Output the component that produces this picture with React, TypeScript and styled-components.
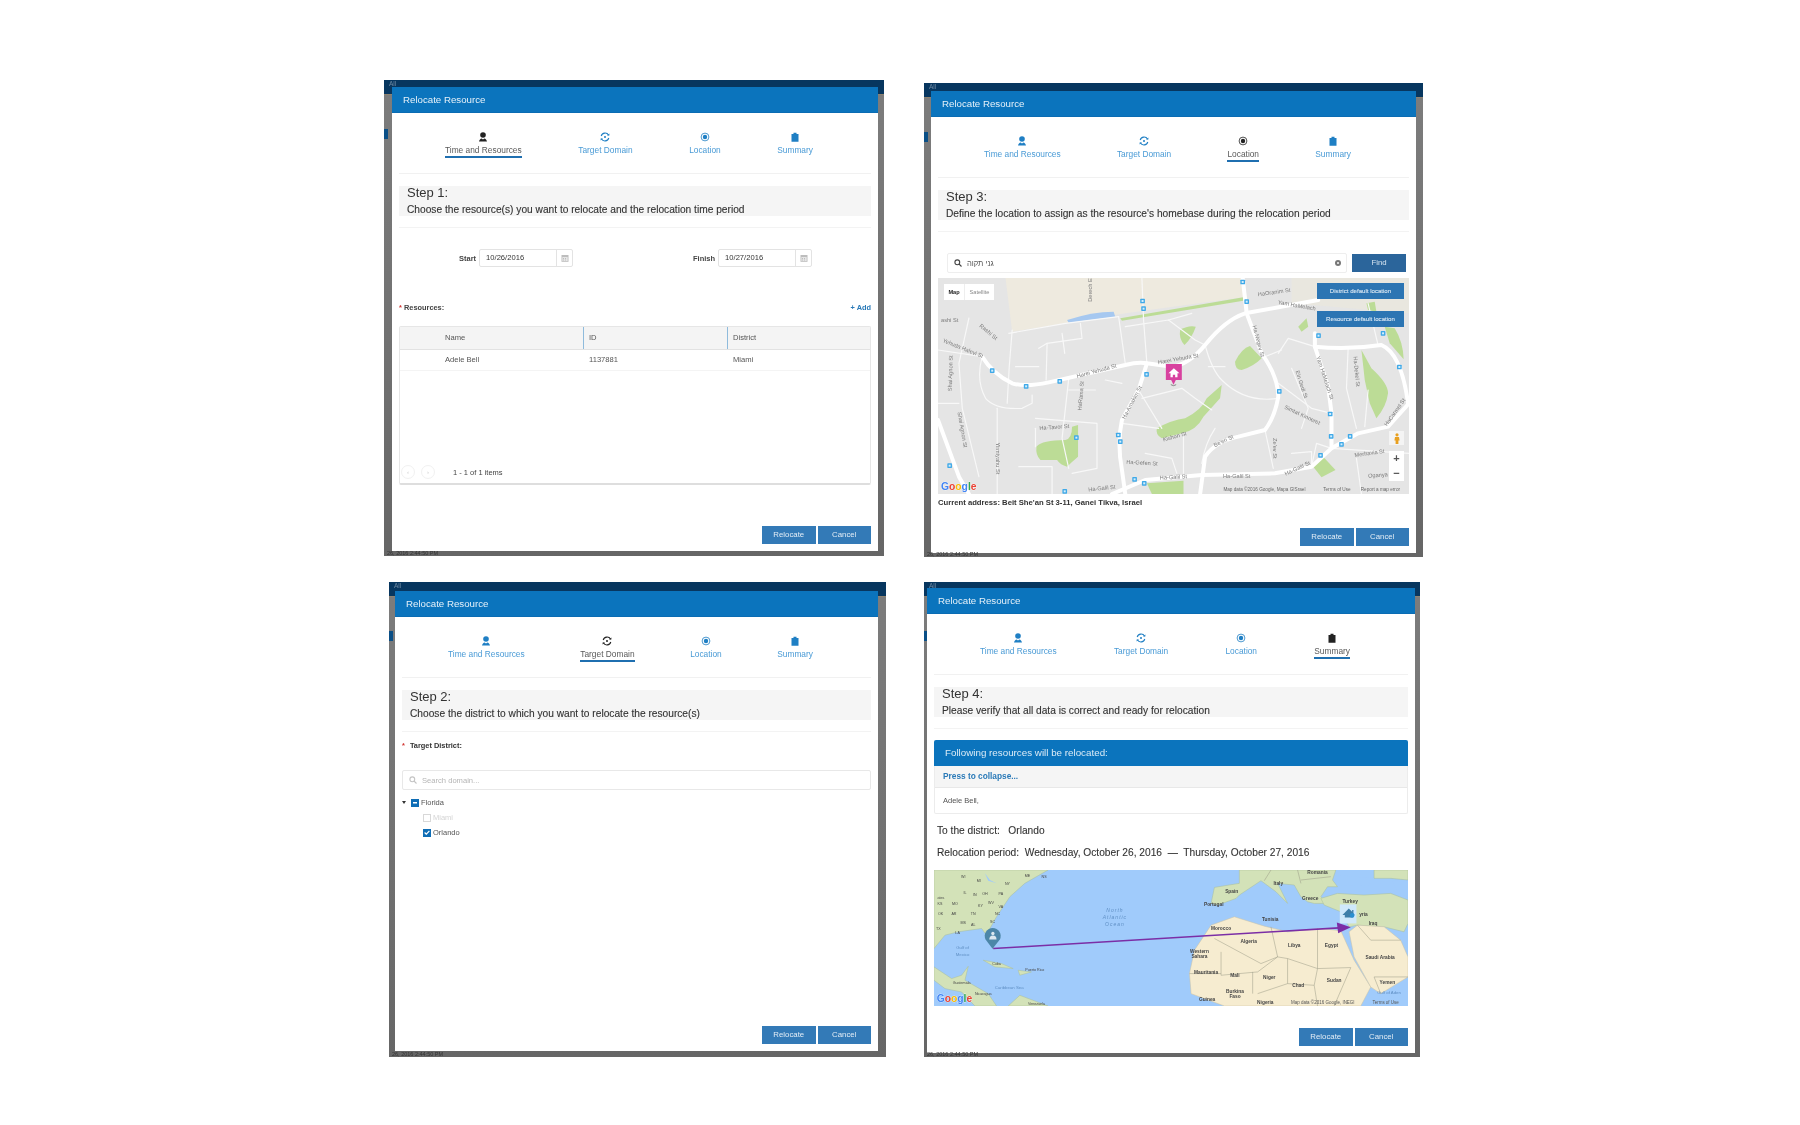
import React from 'react';
import styled, { createGlobalStyle } from 'styled-components';

const FONT = '"Liberation Sans", Arial, sans-serif';
const TABS = ['Time and Resources', 'Target Domain', 'Location', 'Summary'];

const GlobalStyle = createGlobalStyle`
  html, body {
    margin: 0;
    background: #fff;
    font-family: ${FONT};
    overflow: hidden;
  }
`;

const Page = styled.div`
  width: 1800px;
  height: 1125px;
  background: #fff;
`;

const ShotRow = styled.div<{ $top: number; $left: number }>`
  display: flex;
  align-items: flex-start;
  padding: ${(p) => p.$top}px 0 0 ${(p) => p.$left}px;
`;

const Shot = styled.div<{ $w: number; $h: number; $ml?: number; $mt?: number; $pad: string }>`
  position: relative;
  box-sizing: border-box;
  display: flex;
  width: ${(p) => p.$w}px;
  height: ${(p) => p.$h}px;
  margin-left: ${(p) => p.$ml ?? 0}px;
  margin-top: ${(p) => p.$mt ?? 0}px;
  padding: ${(p) => p.$pad};
  filter: blur(0.3px);
  background:
    linear-gradient(90deg, #0a4f86 0 4px, transparent 4px) 0 49px / 100% 10px no-repeat,
    linear-gradient(#07365f 0 14px, #8d8270 14px 15px, #7c7c7c 15px, #707070 60%, #666 100%);
`;

const TopLabel = styled.span`
  position: absolute;
  left: 5px;
  top: 0;
  font-size: 6.5px;
  line-height: 7px;
  color: #6f8aa3;
`;

const StampLabel = styled.span`
  position: absolute;
  left: 3px;
  bottom: 0;
  font-size: 5.5px;
  line-height: 6px;
  color: #333;
  white-space: nowrap;
`;

const Modal = styled.div`
  flex: 1;
  min-width: 0;
  display: flex;
  flex-direction: column;
  background: #fff;
`;

const ModalHeader = styled.div`
  height: 26px;
  flex: none;
  box-sizing: border-box;
  padding-left: 11px;
  background: #0b74bd;
  border-bottom: 1px solid #0a6cb3;
  color: #e6f1f9;
  font-size: 9.7px;
  line-height: 25px;
`;

const ModalBody = styled.div`
  flex: 1;
  display: flex;
  flex-direction: column;
  padding: 0 7px 7px;
`;

const TabBar = styled.div`
  height: 61px;
  flex: none;
  box-sizing: border-box;
  display: flex;
  justify-content: space-between;
  align-items: flex-start;
  padding: 19px 58px 0 46px;
  border-bottom: 1px solid #f1f1f1;
`;

const Tab = styled.div<{ $active?: boolean }>`
  display: flex;
  flex-direction: column;
  align-items: center;
  color: ${(p) => (p.$active ? '#5a5a5a' : '#4a9bd6')};
  svg {
    color: ${(p) => (p.$active ? '#222' : '#1f7fc4')};
    display: block;
  }
`;

const TabLabel = styled.span<{ $active?: boolean }>`
  margin-top: 3px;
  padding-bottom: 1px;
  font-size: 8.35px;
  line-height: 10px;
  white-space: nowrap;
  border-bottom: 2px solid ${(p) => (p.$active ? '#1f6fb0' : 'transparent')};
`;

const StepBlock = styled.div`
  margin-top: 12px;
  height: 30px;
  flex: none;
  overflow: hidden;
  box-sizing: border-box;
  padding-left: 8px;
  background: #f5f5f5;
`;

const StepTitle = styled.div`
  font-size: 13px;
  line-height: 14px;
  color: #333;
`;

const StepText = styled.div`
  margin-top: 4px;
  font-size: 10.2px;
  line-height: 11px;
  color: #333;
  white-space: nowrap;
  -webkit-text-stroke: 0.12px #333;
`;

const Divider = styled.div`
  margin-top: 11px;
  height: 1px;
  flex: none;
  background: #f3f3f3;
`;

const Footer = styled.div`
  margin-top: auto;
  display: flex;
  justify-content: flex-end;
  gap: 2px;
`;

const ActionButton = styled.div`
  width: 53.5px;
  height: 18px;
  box-sizing: border-box;
  background: #337ab7;
  color: #e3edf6;
  font-size: 7.8px;
  line-height: 18px;
  text-align: center;
`;

/* step 1 */
const DateRow = styled.div`
  margin-top: 21px;
  display: grid;
  grid-template-columns: 234px 1fr;
  padding-left: 60px;
`;

const DateGroup = styled.div`
  display: flex;
  align-items: center;
  gap: 3px;
`;

const DateLabel = styled.span`
  font-size: 7.5px;
  font-weight: bold;
  color: #444;
`;

const DateField = styled.div`
  width: 94px;
  height: 18px;
  box-sizing: border-box;
  display: flex;
  border: 1px solid #e3e3e3;
  border-radius: 2px;
  font-size: 7.6px;
  line-height: 16px;
  color: #333;
`;

const DateValue = styled.span`
  flex: 1;
  padding-left: 6px;
  border-right: 1px solid #e3e3e3;
`;

const CalendarCell = styled.span`
  width: 15px;
  display: flex;
  align-items: center;
  justify-content: center;
`;

const ResourcesRow = styled.div`
  margin-top: 35px;
  display: flex;
  justify-content: space-between;
  font-size: 7.4px;
  line-height: 12px;
  font-weight: bold;
  color: #444;
`;

const Required = styled.span`
  color: #d0312d;
`;

const AddLink = styled.span`
  color: #2a7ab8;
`;

const Table = styled.div`
  margin-top: 12px;
  height: 159px;
  box-sizing: border-box;
  display: flex;
  flex-direction: column;
  border: 1px solid #e6e6e6;
  border-bottom: 2px solid #dedede;
  border-radius: 2px;
`;

const TableRow = styled.div<{ $head?: boolean }>`
  display: grid;
  grid-template-columns: 183px 144px 1fr;
  height: ${(p) => (p.$head ? 23 : 21)}px;
  flex: none;
  box-sizing: border-box;
  background: ${(p) => (p.$head ? '#f4f4f4' : '#fff')};
  border-bottom: 1px solid ${(p) => (p.$head ? '#e2e2e2' : '#f4f4f4')};
  font-size: 7.6px;
  line-height: ${(p) => (p.$head ? 22 : 20)}px;
  color: #555;
`;

const Cell = styled.div<{ $first?: boolean; $head?: boolean }>`
  padding-left: ${(p) => (p.$first ? 45 : 5)}px;
  border-left: ${(p) => (p.$first || !p.$head ? 'none' : '1px solid #8fbbdc')};
  margin-left: ${(p) => (p.$first || p.$head ? 0 : 1)}px;
`;

const Pager = styled.div`
  margin-top: auto;
  height: 22px;
  display: flex;
  align-items: center;
  padding-left: 1px;
  gap: 6px;
  font-size: 7.5px;
  color: #444;
`;

const PagerDot = styled.span`
  width: 14px;
  height: 14px;
  box-sizing: border-box;
  border: 1px solid #f1f1f1;
  border-radius: 50%;
  color: #ccc;
  font-size: 6px;
  line-height: 12px;
  text-align: center;
`;

const PagerText = styled.span`
  margin-left: 12px;
`;

/* step 3 */
const SearchRow = styled.div`
  margin-top: 21px;
  display: flex;
  align-items: center;
  gap: 5px;
  padding: 0 3px 0 9px;
`;

const SearchBox = styled.div<{ $full?: boolean }>`
  flex: 1;
  height: 20px;
  box-sizing: border-box;
  display: flex;
  align-items: center;
  gap: 5px;
  padding: 0 5px 0 6px;
  border: 1px solid ${(p) => (p.$full ? '#e8e8e8' : '#eee')};
  border-radius: 2px;
  font-size: 7.6px;
  color: ${(p) => (p.$full ? '#b5b5b5' : '#555')};
`;

const SearchText = styled.span`
  flex: 1;
`;

const FindButton = styled.div`
  width: 54px;
  height: 18px;
  background: #2b659b;
  color: #d7e5f1;
  font-size: 7.8px;
  line-height: 18px;
  text-align: center;
`;

const MapFrame = styled.div<{ $h: number; $mt: number }>`
  position: relative;
  flex: none;
  height: ${(p) => p.$h}px;
  margin-top: ${(p) => p.$mt}px;
  overflow: hidden;
`;

const MapArt = styled.svg`
  display: block;
  width: 100%;
  height: 100%;
  text {
    font-family: ${FONT};
  }
`;

const MapTypes = styled.div`
  position: absolute;
  left: 6px;
  top: 6px;
  width: 50px;
  height: 16px;
  display: flex;
  background: #fff;
  font-size: 5.6px;
  line-height: 16px;
  color: #888;
  text-align: center;
`;

const MapType = styled.span<{ $on?: boolean }>`
  flex: ${(p) => (p.$on ? '0 0 20px' : '1')};
  color: ${(p) => (p.$on ? '#222' : '#888')};
  font-weight: ${(p) => (p.$on ? 'bold' : 'normal')};
  border-right: ${(p) => (p.$on ? '1px solid #eee' : 'none')};
`;

const MapAction = styled.div<{ $top: number }>`
  position: absolute;
  right: 5px;
  top: ${(p) => p.$top}px;
  width: 87px;
  height: 16px;
  background: #2c75b3;
  color: #d9e7f3;
  font-size: 6.1px;
  line-height: 15px;
  text-align: center;
  -webkit-text-stroke: 0.1px #d9e7f3;
`;

const Pegman = styled.div`
  position: absolute;
  right: 5px;
  top: 153px;
  width: 15px;
  height: 14px;
  display: flex;
  justify-content: center;
  align-items: center;
  background: #f4f4f4;
`;

const ZoomBox = styled.div`
  position: absolute;
  right: 5px;
  top: 173px;
  width: 15px;
  height: 30px;
  background: #fff;
  color: #555;
  font-size: 11px;
  font-weight: bold;
  line-height: 15px;
  text-align: center;
`;

const AddressLine = styled.div`
  margin-top: 3px;
  font-size: 7.7px;
  font-weight: bold;
  line-height: 12px;
  color: #333;
`;

/* step 2 */
const FieldLabel = styled.div`
  margin-top: 8px;
  display: flex;
  gap: 5px;
  font-size: 7.4px;
  font-weight: bold;
  line-height: 12px;
  color: #333;
`;

const TreeSearch = styled.div`
  margin-top: 18px;
  display: flex;
`;

const Tree = styled.div`
  margin-top: 5px;
`;

const TreeRow = styled.div<{ $child?: boolean; $muted?: boolean }>`
  height: 15px;
  display: flex;
  align-items: center;
  gap: 2px;
  padding-left: ${(p) => (p.$child ? 21 : 0)}px;
  font-size: 7.5px;
  color: ${(p) => (p.$muted ? '#d4d4d4' : '#555')};
`;

const TreeArrow = styled.span`
  width: 0;
  height: 0;
  margin-right: 3px;
  border-left: 2px solid transparent;
  border-right: 2px solid transparent;
  border-top: 3px solid #333;
`;

const CheckBox = styled.span<{ $on?: boolean }>`
  width: 8px;
  height: 8px;
  box-sizing: border-box;
  display: flex;
  align-items: center;
  justify-content: center;
  background: ${(p) => (p.$on ? '#0f6db5' : '#fff')};
  border: 1px solid ${(p) => (p.$on ? '#0f6db5' : '#d8d8d8')};
`;

/* step 4 */
const Panel = styled.div`
  margin-top: 11px;
  border: 1px solid #ececec;
  border-top: none;
  border-radius: 2px;
`;

const PanelHead = styled.div`
  height: 26px;
  margin: 0 -1px;
  padding-left: 11px;
  background: #0b74bd;
  border-radius: 2px 2px 0 0;
  color: #dcebf6;
  font-size: 9.8px;
  line-height: 26px;
`;

const CollapseRow = styled.div`
  height: 22px;
  box-sizing: border-box;
  padding-left: 8px;
  background: #f5f5f5;
  border-bottom: 1px solid #e8e8e8;
  color: #2a7ab8;
  font-size: 8.3px;
  font-weight: bold;
  line-height: 21px;
`;

const PanelNames = styled.div`
  height: 25px;
  padding-left: 8px;
  font-size: 7.5px;
  line-height: 25px;
  color: #555;
`;

const SummaryLine = styled.div<{ $mt: number }>`
  margin-top: ${(p) => p.$mt}px;
  padding-left: 3px;
  font-size: 10.2px;
  line-height: 12px;
  color: #333;
  white-space: pre;
  -webkit-text-stroke: 0.1px #333;
`;

const TabIcon = ({ index }: { index: number }) => {
  if (index === 0) {
    return (
      <svg width="10" height="10" viewBox="0 0 10 10" fill="currentColor">
        <circle cx="5" cy="3" r="2.8" />
        <path d="M1 9.600c.2-2 1.600-3 2.600-3.200L5 7.400l1.400-1c1 .2 2.400 1.200 2.600 3.200z" />
      </svg>
    );
  }
  if (index === 1) {
    return (
      <svg width="10" height="10" viewBox="0 0 10 10" fill="none" stroke="currentColor" strokeWidth="1.1">
        <path d="M1.2 4A4 4 0 0 1 8.600 3.200" />
        <path d="M8.800 6A4 4 0 0 1 1.400 6.800" />
        <path d="M7 3.600h2.400V1.400z" fill="currentColor" stroke="none" />
        <path d="M3 6.400H.6v2.200z" fill="currentColor" stroke="none" />
        <circle cx="5" cy="5" r="1" fill="currentColor" stroke="none" />
      </svg>
    );
  }
  if (index === 2) {
    return (
      <svg width="10" height="10" viewBox="0 0 10 10" fill="none" stroke="currentColor">
        <circle cx="5" cy="5" r="3.9" strokeWidth=".8" />
        <circle cx="5" cy="5" r="2.2" fill="currentColor" stroke="none" />
      </svg>
    );
  }
  return (
    <svg width="10" height="10" viewBox="0 0 10 10" fill="currentColor">
      <path d="M1.500 2h2V.8h3V2h2v7.800h-7z" />
    </svg>
  );
};

const Tabs = ({ active }: { active: number }) => (
  <TabBar>
    {TABS.map((label, i) => (
      <Tab key={label} $active={i === active}>
        <TabIcon index={i} />
        <TabLabel $active={i === active}>{label}</TabLabel>
      </Tab>
    ))}
  </TabBar>
);

const Calendar = () => (
  <svg width="8" height="8" viewBox="0 0 8 8" fill="#bdbdbd">
    <path d="M.5 1h7v6.800h-7z" />
    <path d="M1.300 3h5.400v4H1.300z" fill="#e6e6e6" />
    <path d="M2 4h1v1H2zm2 0h1v1H4zM2 5.600h1v1H2zm2 0h1v1H4z" />
  </svg>
);

const Magnifier = ({ color }: { color: string }) => (
  <svg width="8" height="8" viewBox="0 0 8 8" fill="none" stroke={color} strokeWidth="1.1">
    <circle cx="3.3" cy="3.3" r="2.4" />
    <path d="M5 5l2.500 2.500" />
  </svg>
);

const STREET_ROADS = [
  'M170 260Q200 310 260 340Q300 352 370 337L600 285Q640 275 665 280L740 290Q790 285 840 225Q900 150 960 130L1180 90',
  'M953 24L965 130L1010 250Q1060 320 1060 380Q1050 440 1020 480L940 500Q870 515 840 560L825 672',
  'M560 672L660 630L830 615L1050 610L1160 590L1220 535L1300 490L1390 470L1453 400',
  'M665 280L640 360L590 450Q575 520 590 600L600 672',
  'M1170 190L1170 230Q1270 240 1370 225Q1430 250 1450 400',
  'M1170 230L1210 350L1220 430V535',
  'M37 450L100 620L130 672',
];

const STREET_LANES = [
  'M260 180Q250 290 245 400',
  'M250 190L420 160L580 140',
  'M580 140L600 280',
  'M650 24L655 150L665 280',
  'M340 235L365 220L470 205L465 160',
  'M365 220L362 330',
  'M410 190L418 250',
  'M600 170L730 150L810 210L840 225',
  'M840 225Q860 300 890 330Q960 400 1060 385',
  'M650 385L770 355L810 385L860 420',
  'M590 460L700 475',
  'M640 360L710 475',
  'M37 240L170 260',
  'M170 260Q150 330 180 385Q210 420 290 415L320 400L320 375',
  'M130 144L100 280L110 415L160 620',
  'M215 415V672',
  'M330 445L515 460V595L440 610',
  'M330 475V530',
  'M430 325L410 505L430 595',
  'M660 550L740 565L755 610',
  'M775 490V610',
  'M830 580Q840 520 870 475',
  'M1020 480L1045 595',
  'M1060 340L1160 415L1220 430',
  'M1100 295L1150 415L1130 475',
  'M1170 230L1090 205L1060 250',
  'M1270 235L1265 355L1295 475',
  'M1160 590L1175 520L1220 535',
  'M1220 535L1453 550',
  'M1295 565L1310 672',
  'M1020 260L1070 240',
  'M37 400H100',
  'M280 590L380 590V672',
  'M1330 100L1360 225',
  'M730 150L800 130',
  'M510 360H430',
  'M590 340L540 330',
  'M270 290H340',
  'M850 290H900',
  'M1330 360L1320 470',
  'M1100 550L1160 545V590',
];

const STREET_GREENS = [
  'M333 530Q350 510 420 510Q440 505 440 470L458 465V560Q440 575 425 590Q405 585 395 570L345 570Q330 555 333 530Z',
  'M695 475Q740 450 780 445Q830 420 845 385L890 345L885 385L835 440Q815 480 770 490L710 505Q690 495 695 475Z',
  'M930 275Q950 235 975 228L1010 265Q985 290 950 300Q930 300 930 275Z',
  'M765 180Q790 165 812 170Q800 205 778 225Q760 205 765 180Z',
  'M1310 240L1340 295Q1390 340 1390 370Q1385 410 1355 445L1335 400L1320 330Z',
  'M1380 170L1410 175Q1435 215 1437 268L1395 220Z',
  'M1165 590L1195 560L1232 600L1190 622Z',
  'M665 640L775 632V672H680Z',
  'M1325 100L1350 95L1355 125L1330 120Z',
  'M1120 170L1145 145L1150 170L1130 185Z',
];

const STREET_PINS = [
  [953, 36], [652, 93], [655, 116], [965, 95], [1181, 197], [1375, 190], [200, 302], [302, 349],
  [403, 334], [664, 313], [1424, 291], [1063, 364], [1216, 432], [453, 503], [579, 495], [585, 515],
  [1219, 499], [1276, 499], [1250, 523], [1187, 556], [72, 587], [628, 628], [657, 640], [418, 664],
];

const STREET_LABELS: [string, number, number, number][] = [
  ['HaOranim St', 1048, 72, -8],
  ['Yam HaMelach', 1115, 112, 10],
  ['Derech El', 499, 58, -90],
  ['ashi St', 72, 155, 0],
  ['Rashi St', 185, 190, 40],
  ['Yehuda Halevi St', 110, 240, 22],
  ['Shai Agnon St', 80, 310, -88],
  ['Shai Agnon St', 105, 480, 80],
  ['Harei Yehuda St', 515, 308, -15],
  ['Harei Yehuda St', 760, 272, -10],
  ['HaRama St', 472, 378, -85],
  ['Ha-Amakim St', 625, 400, -62],
  ['Ha-Tavor St', 387, 477, -4],
  ['Yirmiyahu St', 212, 565, 90],
  ['Ha-Gefen St', 650, 584, 3],
  ['Ha-Galil St', 745, 627, -3],
  ['Ha-Galil St', 935, 623, 0],
  ['Ha-Galil St', 1120, 600, -25],
  ['Ha-Galil St', 530, 660, -6],
  ['Kishon St', 750, 505, -15],
  ['Be\'eri St', 898, 518, -25],
  ['Ze\'ev St', 1045, 535, 90],
  ['Ha-Negev St', 995, 215, 75],
  ['Yam HaMelach St', 1195, 325, 72],
  ['Ein Gedi St', 1125, 345, 72],
  ['Ha-Dekel St', 1290, 305, 85],
  ['Simtat Kinneret', 1130, 440, 25],
  ['HaCarmel St', 1415, 430, -55],
  ['Merhavia St', 1335, 555, -8],
  ['Oganya', 1360, 621, -4],
];

const GoogleMark = ({ x, y, size }: { x: number; y: number; size: number }) => (
  <text x={x} y={y} fontSize={size} fontWeight="bold" stroke="#fff" strokeWidth="1.5" paintOrder="stroke">
    <tspan fill="#4285f4">G</tspan>
    <tspan fill="#ea4335">o</tspan>
    <tspan fill="#fbbc05">o</tspan>
    <tspan fill="#4285f4">g</tspan>
    <tspan fill="#34a853">l</tspan>
    <tspan fill="#ea4335">e</tspan>
  </text>
);

const StreetMap = () => (
  <MapFrame $h={216} $mt={5}>
    <MapArt viewBox="37 24 1416 648" preserveAspectRatio="none">
      <rect x="37" y="24" width="1416" height="648" fill="#e5e5e5" />
      <path d="M130 24H953L965 80L600 130L420 160L260 185L240 24Z" fill="#eeeadf" />
      <path d="M1100 24H1453V130L1100 100Z" fill="#e9e7df" />
      <path d="M425 150Q500 125 565 125L570 140L430 158Z" fill="#a6c8f0" />
      <path d="M585 145L955 82V92L590 152Z" fill="#bcdc96" />
      {STREET_GREENS.map((d) => (
        <path key={d} d={d} fill="#bcdc96" />
      ))}
      {STREET_LANES.map((d) => (
        <path key={d} d={d} fill="none" stroke="#f8f8f8" strokeWidth="3.5" strokeLinecap="round" strokeLinejoin="round" />
      ))}
      {STREET_ROADS.map((d) => (
        <path key={d} d={d} fill="none" stroke="#fff" strokeWidth="12" strokeLinecap="round" strokeLinejoin="round" />
      ))}
      {STREET_PINS.map(([x, y]) => (
        <g key={`${x}-${y}`}>
          <rect x={x - 7} y={y - 7} width="14" height="14" rx="2" fill="#3fa9e8" />
          <rect x={x - 3} y={y - 3} width="6" height="6" fill="#d5eefb" />
        </g>
      ))}
      {STREET_LABELS.map(([label, x, y, r]) => (
        <text
          key={`${label}-${x}`}
          x={x}
          y={y}
          fontSize="17"
          fill="#7b7b7b"
          textAnchor="middle"
          transform={`rotate(${r} ${x} ${y})`}
        >
          {label}
        </text>
      ))}
      <path d="M722 282H770V330H752L745 344L738 330H722Z" fill="#d8419f" />
      <path d="M746 295L730 310H736V322H743V314H750V322H757V310H763Z" fill="#fff" />
      <path d="M737 344Q745 350 753 344" fill="none" stroke="#555" strokeWidth="2" />
      <GoogleMark x={46} y={660} size={31} />
      <text x="895" y="664" fontSize="14" fill="#666">Map data ©2016 Google, Mapa GISrael</text>
      <text x="1195" y="664" fontSize="14" fill="#666">Terms of Use</text>
      <text x="1308" y="664" fontSize="14" fill="#666">Report a map error</text>
    </MapArt>
    <MapTypes>
      <MapType $on>Map</MapType>
      <MapType>Satellite</MapType>
    </MapTypes>
    <MapAction $top={5}>District default location</MapAction>
    <MapAction $top={33}>Resource default location</MapAction>
    <Pegman>
      <svg width="6" height="11" viewBox="0 0 6 11" fill="#e8a020">
        <circle cx="3" cy="1.8" r="1.6" />
        <path d="M1 4h4l.6 3.500H4.400V11H1.600V7.500H.4z" />
      </svg>
    </Pegman>
    <ZoomBox>
      +
      <br />−
    </ZoomBox>
  </MapFrame>
);

const WORLD_GREEN = [
  'M27 30H370L300 70L255 110L215 170L195 205L205 265L190 232L170 205L100 215L60 225L27 265Z',
  'M27 320L80 355L110 345L130 318L120 360L190 400L215 437H150L110 395L60 385L27 360Z',
  'M250 437L285 405L370 437Z',
  'M175 300L230 310L265 325L210 320Z',
  'M280 330L320 335L285 345Z',
  'M870 82L945 70L945 30H1235L1225 60L1240 80H1210L1190 110L1210 130L1170 130L1150 125L1130 110L1110 75L1060 70L1090 130L1055 95L1010 62L945 105L935 115L880 135L860 130Z',
  'M1190 115L1240 100L1320 105L1400 100L1452 120V190L1440 215L1380 200L1300 195L1275 200L1250 155L1200 135Z',
  'M1350 30H1452V60L1400 55L1350 55Z',
];

const WORLD_SAND = [
  'M860 195L930 170L1020 198L1090 215L1190 205L1250 212L1290 300L1340 380L1310 437H900L800 400L795 340L810 270Z',
  'M1275 215L1300 195L1380 200L1430 240L1452 290V350L1370 400L1340 380L1290 290Z',
];

const WORLD_BORDERS = [
  'M870 235L1010 310L1060 290L1040 200',
  'M890 275V345L1000 335L1060 290',
  'M1060 290L1090 295L1180 325V205',
  'M1090 295V370L1170 375L1180 325',
  'M985 335V400',
  'M1180 325L1280 322',
  'M1170 375L1180 437',
  'M1280 322L1230 437',
  'M795 340H890',
  'M1000 400L1090 370',
  'M1300 195L1340 240L1430 240',
  'M1370 400L1350 350H1452',
  'M1040 30L1020 62',
  'M1120 30L1130 70',
  'M1220 50L1130 60',
];

const WORLD_LABELS: [string, number, number][] = [
  ['Romania', 1180, 41], ['Italy', 1062, 74], ['Spain', 922, 99], ['Portugal', 868, 137], ['Greece', 1158, 120],
  ['Turkey', 1278, 128], ['yria', 1318, 169], ['Iraq', 1347, 196], ['Tunisia', 1038, 182], ['Morocco', 890, 209],
  ['Algeria', 973, 248], ['Libya', 1110, 259], ['Egypt', 1222, 260], ['Saudi Arabia', 1368, 295],
  ['Western', 825, 278], ['Sahara', 825, 292], ['Mauritania', 845, 340], ['Mali', 932, 351], ['Niger', 1035, 356],
  ['Chad', 1122, 380], ['Sudan', 1230, 366], ['Yemen', 1390, 372], ['Burkina', 932, 397], ['Faso', 932, 412],
  ['Guinea', 848, 422], ['Nigeria', 1023, 431], ['Cuba', 215, 314], ['Puerto Rico', 330, 331],
  ['Guatemala', 110, 370], ['Nicaragua', 175, 404], ['Venezuela', 335, 434], ['ME', 308, 50], ['NS', 358, 54],
  ['NY', 248, 76], ['PA', 228, 104], ['MI', 162, 66], ['WI', 115, 54], ['IL', 120, 101], ['IN', 150, 109],
  ['OH', 180, 106], ['KY', 167, 141], ['WV', 198, 131], ['VA', 228, 144], ['MO', 90, 134], ['KS', 45, 134],
  ['ates', 48, 116], ['OK', 47, 166], ['AR', 87, 166], ['TN', 145, 164], ['NC', 218, 164], ['MS', 115, 192],
  ['AL', 145, 199], ['SC', 203, 189], ['LA', 98, 222], ['TX', 40, 209],
];

const WORLD_WATER: [string, number, number][] = [
  ['Gulf of', 113, 267], ['Mexico', 113, 286], ['Caribbean Sea', 253, 385], ['Gulf of Aden', 1395, 402],
];

const WorldMap = () => (
  <MapFrame $h={136} $mt={11}>
    <MapArt viewBox="27 30 1425 407" preserveAspectRatio="none">
      <rect x="27" y="30" width="1425" height="407" fill="#a0cbfb" />
      {WORLD_GREEN.map((d) => (
        <path key={d} d={d} fill="#d3e2b8" stroke="#a9bf9a" strokeWidth="1.5" />
      ))}
      {WORLD_SAND.map((d) => (
        <path key={d} d={d} fill="#f6ecd0" stroke="#cdc3a2" strokeWidth="1.5" />
      ))}
      <path d="M180 40L195 60L215 70L190 62Z" fill="#a0cbfb" />
      <path d="M1235 45L1350 55L1330 78L1245 75Z" fill="#a0cbfb" />
      <path d="M1405 60L1452 62V110L1425 100Z" fill="#a0cbfb" />
      {WORLD_BORDERS.map((d) => (
        <path key={d} d={d} fill="none" stroke="#9a9a86" strokeWidth="1.5" />
      ))}
      {WORLD_LABELS.map(([label, x, y]) => (
        <text
          key={`${label}-${x}`}
          x={x}
          y={y}
          fontSize={x > 700 ? 14.5 : 11}
          fontWeight={x > 700 ? 'bold' : 'normal'}
          fill="#444"
          textAnchor="middle"
        >
          {label}
        </text>
      ))}
      {WORLD_WATER.map(([label, x, y]) => (
        <text key={`${label}-${x}`} x={x} y={y} fontSize="13" fill="#5f8fc4" textAnchor="middle">
          {label}
        </text>
      ))}
      {['North', 'Atlantic', 'Ocean'].map((label, i) => (
        <text key={label} x="571" y={156 + i * 21} fontSize="15" fontStyle="italic" letterSpacing="3" fill="#5f8fc4" textAnchor="middle">
          {label}
        </text>
      ))}
      <path d="M1247 133H1297V190H1247Z" fill="#cfe8fb" />
      <path d="M1255 165L1274 145L1284 155V150H1288V160L1292 165H1286V172H1262V165Z" fill="#3f7ea8" />
      <circle cx="1284" cy="166" r="7" fill="#2b8fd0" />
      <path d="M203 266L182 238A24 24 0 1 1 225 238Z" fill="#4c86a8" />
      <circle cx="204" cy="220" r="5" fill="#dbe8ef" />
      <path d="M193 238Q194 226 204 226Q215 226 215 238Z" fill="#dbe8ef" />
      <path d="M205 265L1245 203" stroke="#7b2ea6" strokeWidth="5" />
      <path d="M1238 187L1280 201L1242 219Z" fill="#7b2ea6" />
      <GoogleMark x={35} y={426} size={31} />
      <text x="1100" y="430" fontSize="13.5" fill="#555">Map data ©2016 Google, INEGI</text>
      <text x="1345" y="430" fontSize="13.5" fill="#555">Terms of Use</text>
    </MapArt>
  </MapFrame>
);

const Dialog = ({ active, title, text, children }: { active: number; title: string; text: string; children?: React.ReactNode }) => (
  <Modal>
    <ModalHeader>Relocate Resource</ModalHeader>
    <ModalBody>
      <Tabs active={active} />
      <StepBlock>
        <StepTitle>{title}</StepTitle>
        <StepText>{text}</StepText>
      </StepBlock>
      <Divider />
      {children}
      <Footer>
        <ActionButton>Relocate</ActionButton>
        <ActionButton>Cancel</ActionButton>
      </Footer>
    </ModalBody>
  </Modal>
);

const DateInput = ({ label, value }: { label: string; value: string }) => (
  <DateGroup>
    <DateLabel>{label}</DateLabel>
    <DateField>
      <DateValue>{value}</DateValue>
      <CalendarCell>
        <Calendar />
      </CalendarCell>
    </DateField>
  </DateGroup>
);

const App = () => (
  <Page>
    <GlobalStyle />
    <ShotRow $top={80} $left={384}>
      <Shot $w={500} $h={476} $pad="7px 6px 5px 8px">
        <TopLabel>All</TopLabel>
        <StampLabel>26, 2016 2:44:50 PM</StampLabel>
        <Dialog active={0} title="Step 1:" text="Choose the resource(s) you want to relocate and the relocation time period">
          <DateRow>
            <DateInput label="Start" value="10/26/2016" />
            <DateInput label="Finish" value="10/27/2016" />
          </DateRow>
          <ResourcesRow>
            <span>
              <Required>* </Required>Resources:
            </span>
            <AddLink>+ Add</AddLink>
          </ResourcesRow>
          <Table>
            <TableRow $head>
              <Cell $first $head>Name</Cell>
              <Cell $head>ID</Cell>
              <Cell $head>District</Cell>
            </TableRow>
            <TableRow>
              <Cell $first>Adele Bell</Cell>
              <Cell>1137881</Cell>
              <Cell>Miami</Cell>
            </TableRow>
            <Pager>
              <PagerDot>‹</PagerDot>
              <PagerDot>›</PagerDot>
              <PagerText>1 - 1 of 1 items</PagerText>
            </Pager>
          </Table>
        </Dialog>
      </Shot>
      <Shot $w={499} $h={474} $ml={40} $mt={3} $pad="8px 7px 4px 7px">
        <TopLabel>All</TopLabel>
        <StampLabel>26, 2016 2:44:50 PM</StampLabel>
        <Dialog active={2} title="Step 3:" text="Define the location to assign as the resource's homebase during the relocation period">
          <SearchRow>
            <SearchBox>
              <Magnifier color="#444" />
              <SearchText>גני תקוה</SearchText>
              <svg width="6" height="6" viewBox="0 0 6 6">
                <circle cx="3" cy="3" r="3" fill="#777" />
                <path d="M2 2l2 2M4 2L2 4" stroke="#fff" strokeWidth=".7" />
              </svg>
            </SearchBox>
            <FindButton>Find</FindButton>
          </SearchRow>
          <StreetMap />
          <AddressLine>Current address: Beit She'an St 3-11, Ganei Tikva, Israel</AddressLine>
        </Dialog>
      </Shot>
    </ShotRow>
    <ShotRow $top={25} $left={389}>
      <Shot $w={497} $h={475} $pad="9px 8px 6px 6px">
        <TopLabel>All</TopLabel>
        <StampLabel>26, 2016 2:44:50 PM</StampLabel>
        <Dialog active={1} title="Step 2:" text="Choose the district to which you want to relocate the resource(s)">
          <FieldLabel>
            <Required>*</Required>
            Target District:
          </FieldLabel>
          <TreeSearch>
            <SearchBox $full>
              <Magnifier color="#c4c4c4" />
              <SearchText>Search domain...</SearchText>
            </SearchBox>
          </TreeSearch>
          <Tree>
            <TreeRow>
              <TreeArrow />
              <CheckBox $on>
                <svg width="4" height="2" viewBox="0 0 4 2">
                  <rect width="4" height="1.5" fill="#fff" />
                </svg>
              </CheckBox>
              Florida
            </TreeRow>
            <TreeRow $child $muted>
              <CheckBox />
              Miami
            </TreeRow>
            <TreeRow $child>
              <CheckBox $on>
                <svg width="6" height="5" viewBox="0 0 6 5" fill="none" stroke="#fff" strokeWidth="1.2">
                  <path d="M.6 2.500l1.700 1.700L5.400.8" />
                </svg>
              </CheckBox>
              Orlando
            </TreeRow>
          </Tree>
        </Dialog>
      </Shot>
      <Shot $w={496} $h={475} $ml={38} $pad="6px 5px 4px 3px">
        <TopLabel>All</TopLabel>
        <StampLabel>26, 2016 2:44:50 PM</StampLabel>
        <Dialog active={3} title="Step 4:" text="Please verify that all data is correct and ready for relocation">
          <Panel>
            <PanelHead>Following resources will be relocated:</PanelHead>
            <CollapseRow>Press to collapse...</CollapseRow>
            <PanelNames>Adele Bell,</PanelNames>
          </Panel>
          <SummaryLine $mt={11}>To the district:   Orlando</SummaryLine>
          <SummaryLine $mt={10}>Relocation period:  Wednesday, October 26, 2016  —  Thursday, October 27, 2016</SummaryLine>
          <WorldMap />
        </Dialog>
      </Shot>
    </ShotRow>
  </Page>
);

export default App;
